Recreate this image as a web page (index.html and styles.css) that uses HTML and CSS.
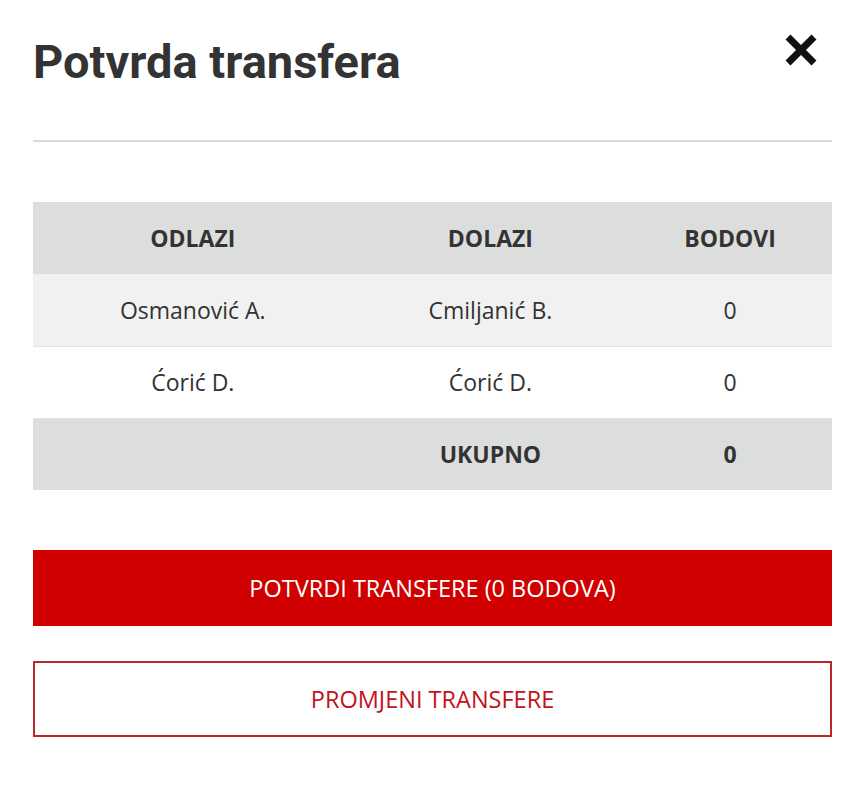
FILE: index.html
```html
<!DOCTYPE html>
<html lang="hr">
<head>
<meta charset="utf-8">
<link rel="stylesheet" href="styles.css">
</head>
<body>
<div class="modal">
  <div class="head">
    <h1 class="title">Potvrda transfera</h1>
    <button class="close" aria-label="Zatvori">
      <svg width="34" height="32" viewBox="0 0 34 32"><path d="M4 3 L30 29 M30 3 L4 29" stroke="#111" stroke-width="7" stroke-linecap="butt"/></svg>
    </button>
  </div>
  <hr class="divider">
  <table class="tbl">
    <thead>
      <tr class="hrow"><th class="c1">ODLAZI</th><th class="c2">DOLAZI</th><th class="c3">BODOVI</th></tr>
    </thead>
    <tbody>
      <tr class="row alt"><td>Osmanović A.</td><td>Cmiljanić B.</td><td>0</td></tr>
      <tr class="row"><td>Ćorić D.</td><td>Ćorić D.</td><td>0</td></tr>
      <tr class="total"><td></td><td>UKUPNO</td><td>0</td></tr>
    </tbody>
  </table>
  <div class="actions">
    <button class="btn primary">POTVRDI TRANSFERE (0 BODOVA)</button>
    <button class="btn outline">PROMJENI TRANSFERE</button>
  </div>
</div>
</body>
</html>
```
FILE: styles.css
```css
* { box-sizing: border-box; }
html, body { margin: 0; padding: 0; background: #fff; }
body { font-family: "Open Sans", "Liberation Sans", sans-serif; color: #333; }
.modal { padding: 0 23px 0 33px; }
.head { display: flex; justify-content: space-between; align-items: flex-start; padding-top: 30px; height: 140px; }
.title { font-family: Roboto, "Liberation Sans", sans-serif; font-weight: 700; font-size: 47px; line-height: 64px; margin: 0; color: #333; }
.close { background: none; border: 0; padding: 0; margin: 4px 14px 0 0; cursor: pointer; display: block; }
.close svg { display: block; }
.divider { border: 0; border-top: 2px solid #dadada; margin: 0; }
.tbl { width: 100%; border-collapse: collapse; margin-top: 60px; table-layout: fixed; }
.tbl th, .tbl td { text-align: center; height: 72px; padding: 0; font-size: 23px; }
.c1 { width: 40%; }
.c2 { width: 34.5%; }
.c3 { width: 25.5%; }
.hrow { background: #dcdddd; }
.hrow th { font-weight: 700; }
.row td { border-bottom: 1px solid #e2e2e2; }
.row.alt { background: #f1f1f1; }
.total { background: #dcdddd; }
.total td { font-weight: 700; }
.actions { display: flex; flex-direction: column; gap: 35px; margin-top: 60px; }
.btn { height: 76px; width: 100%; font-family: "Open Sans", "Liberation Sans", sans-serif; font-size: 23.5px; cursor: pointer; }
.primary { background: #d10000; color: #fff; border: 0; }
.outline { background: #fff; color: #c0141a; border: 2px solid #b8282c; }
```
